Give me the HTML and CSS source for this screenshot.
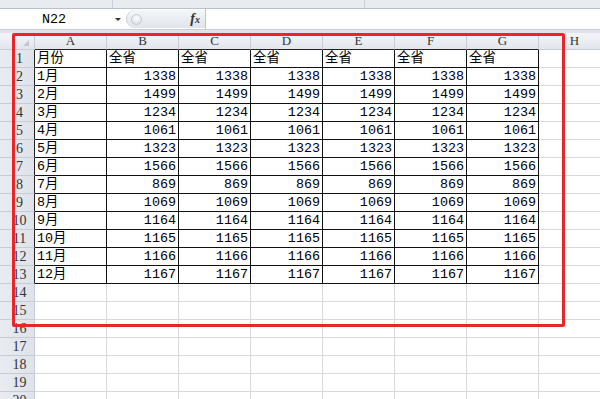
FILE: index.html
```html
<!DOCTYPE HTML>
<html>
<head>
<title>月份数据表</title>
<meta charset="utf-8" />
<link rel="stylesheet" href="styles.css">
</head>
<body>
  <div class="ribbon">
    <div class="rb-a"></div>
    <div class="rb-b"></div>
  </div>
  <div class="formula-bar">
    <div class="name-box">N22<span class="drop"></span></div>
    <div class="fx-box">
      <span class="knob"></span>
      <span class="fx"><i>f</i><span class="x">x</span></span>
    </div>
    <div class="formula-input"></div>
  </div>
  <div class="gap"></div>
  <div class="sheet" id="sheet"></div>
  <div class="mark"></div>
  <script>
    //生成表格: 表头 + 20行
    var sheet=document.getElementById("sheet");
    var cols=["A","B","C","D","E","F","G","H"];
    var vals=[1338,1499,1234,1061,1323,1566,869,1069,1164,1165,1166,1167];
    var html=`<div class="corner"><span class="tri"></span></div>`;
    for(var i=0;i<cols.length;i++){
      html+=`<div class="ch${i<7?' ch-t':''}">${cols[i]}</div>`;
    }
    for(var r=1;r<=20;r++){
      var inTable=r<=13;
      html+=`<div class="rh${inTable?' rh-t':''}">${r}</div>`;
      for(var c=0;c<cols.length;c++){
        var cls="c";
        var txt="";
        if(inTable && c<7){
          cls+=" t";
          if(r==1){
            txt=c==0?"月份":"全省";
          }else if(c==0){
            txt=(r-1)+"月";
          }else{
            txt=vals[r-2];
            cls+=" num";
          }
        }
        html+=`<div class="${cls}">${txt}</div>`;
      }
    }
    sheet.innerHTML=html;
  </script>
</body>
</html>
```

FILE: styles.css
```css
*{
  margin:0;
  padding:0;
  box-sizing:border-box;
}
body{
  width:600px;
  height:399px;
  overflow:hidden;
  background:#fff;
  font-family:"Liberation Mono","Noto Sans CJK SC",monospace;
  color:#000;
}
.ribbon{
  height:9px;
  display:flex;
  background:#e8ebf0;
  border-bottom:1px solid #b7c0cc;
}
.rb-a{ width:113px; border-right:1px solid #c9d0da; }
.rb-b{ width:252px; border-right:1px solid #c9d0da; }
.formula-bar{
  height:21px;
  display:flex;
  background:#fff;
  border-bottom:1px solid #c6cdd7;
}
.name-box{
  width:126px;
  display:flex;
  align-items:center;
  justify-content:space-between;
  padding:0 5px 0 42px;
  font-size:13.4px;
}
.drop{
  width:0; height:0;
  border-left:3px solid transparent;
  border-right:3px solid transparent;
  border-top:3px solid #333;
  margin-top:1px;
}
.fx-box{
  width:79px;
  margin:1px 0;
  display:flex;
  align-items:center;
  justify-content:space-between;
  padding:0 5px 0 4px;
  background:linear-gradient(#f4f6f9,#dfe4ea);
  border-radius:10px 0 0 10px;
  border-left:1px solid #c8cfd9;
}
.knob{
  width:11px; height:11px;
  border-radius:50%;
  background:radial-gradient(circle at 50% 35%,#fff,#d3d8df);
  border:1px solid #c4cad3;
}
.fx{
  font-family:"Liberation Serif",serif;
  font-weight:bold;
  font-size:14px;
  color:#333;
}
.fx .x{ font-size:10px; font-style:italic; }
.formula-input{
  flex:1;
  border-left:1px solid #b8c1cd;
}
.gap{
  height:3px;
  background:#dfe3e9;
}
.sheet{
  display:grid;
  grid-template-columns:35px repeat(8,72px);
  grid-template-rows:17px;
  grid-auto-rows:18px;
}
.corner,.ch,.rh{
  background:linear-gradient(#f3f5f8,#e2e6ec);
  border-right:1px solid #c5ccd6;
  border-bottom:1px solid #c5ccd6;
  color:#333;
  font-family:"Liberation Serif",serif;
}
.corner{ position:relative; }
.tri{
  position:absolute;
  right:5px; bottom:3px;
  width:0; height:0;
  border-left:6px solid transparent;
  border-bottom:6px solid #c2c8d0;
}
.ch{
  text-align:center;
  font-size:13px;
  line-height:16px;
}
.ch-t{ border-bottom-color:#222; }
.rh{
  font-size:14px;
  line-height:17px;
  text-align:center;
  padding-left:5px;
  background:linear-gradient(90deg,#e9ecf1,#dfe3e9);
}
.rh-t{ border-right-color:#222; }
.c{
  border-right:1px solid #d9d9d9;
  border-bottom:1px solid #d9d9d9;
  font-size:13.4px;
  line-height:17px;
  padding:0 2px;
  white-space:nowrap;
  overflow:hidden;
}
.c.t{
  border-right-color:#111;
  border-bottom-color:#111;
}
.num{ text-align:right; }
.mark{
  position:absolute;
  left:12px; top:33px;
  width:553px; height:294px;
  border:3px solid #e8262a;
  border-radius:2px;
}
```
